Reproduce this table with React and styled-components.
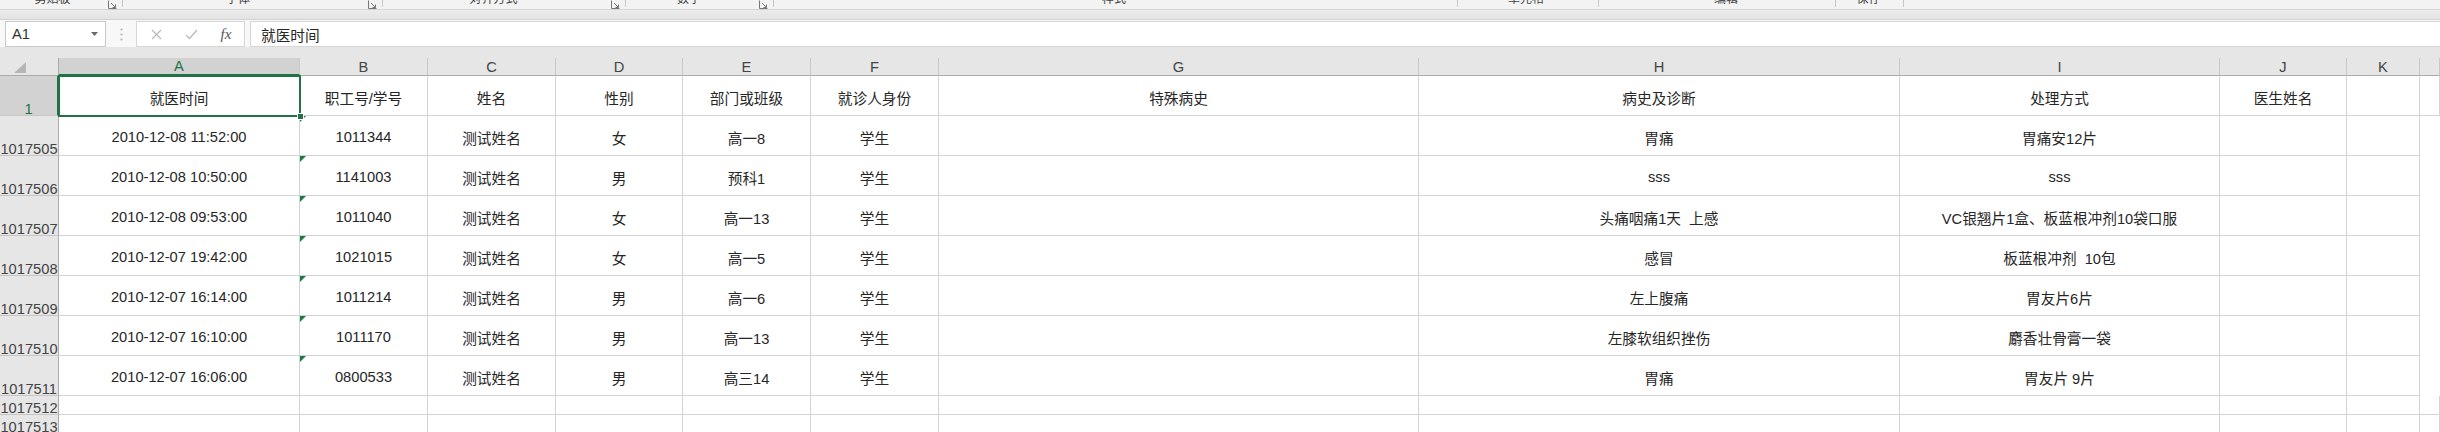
import React from "react";
import styled, { createGlobalStyle } from "styled-components";

const GlobalStyle = createGlobalStyle`
  html, body { margin: 0; padding: 0; background: #ffffff; }
  body {
    width: 2440px; height: 432px; overflow: hidden;
    font-family: "Liberation Sans", "Noto Sans CJK SC", sans-serif;
  }
  * { box-sizing: border-box; }
`;

const COLS = "59px 241px 128px 128px 127px 128px 128px 480px 481px 320px 127px 73px 1fr";
const GREEN = "#217346";

const Window = styled.div`
  width: 2440px;
  height: 432px;
  overflow: hidden;
  display: flex;
  flex-direction: column;
  background: #ffffff;
`;

/* ---------- ribbon remnant ---------- */
const RibbonStrip = styled.div`
  flex: none;
  height: 10px;
  display: flex;
  align-items: flex-start;
  overflow: hidden;
  background: #f3f3f3;
  border-bottom: 1px solid #d5d5d5;
`;
const GroupLabel = styled.div`
  flex: none;
  width: ${(p) => p.$w}px;
  margin-top: -8px;
  text-align: center;
  font-family: "Noto Sans CJK SC", sans-serif;
  font-size: 12px;
  line-height: 12px;
  color: #444444;
  white-space: nowrap;
`;
const Launcher = styled.div`
  flex: none;
  width: ${(p) => p.$w}px;
  display: flex;
  justify-content: center;
  align-items: flex-start;
  gap: 5px;
`;
const GroupSep = styled.div`
  flex: none;
  width: ${(p) => p.$w}px;
  display: flex;
  justify-content: center;
  &::before {
    content: "";
    width: 1px;
    height: 7px;
    background: #c6c6c6;
  }
`;
const SepLine = styled.span`
  width: 1px;
  height: 7px;
  background: #c6c6c6;
`;

const Band = styled.div`
  flex: none;
  height: 10px;
  background: linear-gradient(#ebebeb, #e3e3e3);
  border-bottom: 1px solid #d2d2d2;
`;

/* ---------- formula bar ---------- */
const FormulaBar = styled.div`
  flex: none;
  height: 27px;
  padding-top: 1px;
  display: flex;
  align-items: flex-start;
  background: #f8f8f8;
`;
const NameBox = styled.div`
  flex: none;
  width: 101px;
  height: 26px;
  margin-left: 5px;
  padding: 0 7px 0 6px;
  display: flex;
  align-items: center;
  justify-content: space-between;
  background: #ffffff;
  border: 1px solid #c9c9c9;
  font-size: 14.67px;
  color: #333333;
`;
const Dots = styled.div`
  flex: none;
  width: 30px;
  height: 26px;
  display: flex;
  align-items: center;
  justify-content: center;
`;
const FxBox = styled.div`
  flex: none;
  width: 109px;
  height: 26px;
  padding-left: 9px;
  display: flex;
  align-items: center;
  gap: 15px;
  background: #ffffff;
  border: 1px solid #d6d6d6;
`;
const FxIcon = styled.span`
  width: 20px;
  display: flex;
  justify-content: center;
  align-items: center;
  color: ${(p) => (p.$active ? "#555555" : "#b8b8b8")};
  font-family: ${(p) => (p.$serif ? '"Liberation Serif", serif' : '"Liberation Sans", sans-serif')};
  font-style: ${(p) => (p.$serif ? "italic" : "normal")};
  font-size: 15px;
`;
const FormulaInput = styled.div`
  flex: 1;
  height: 26px;
  margin-left: 5px;
  padding-left: 10px;
  display: flex;
  align-items: center;
  background: #ffffff;
  border: 1px solid #d6d6d6;
  border-right: none;
  font-size: 14.67px;
  color: #262626;
`;

/* ---------- sheet ---------- */
const Sheet = styled.div`
  flex: 1;
  display: flex;
  flex-direction: column;
  background: #e6e6e6;
  padding-top: 11px;
  overflow: hidden;
`;
const Row = styled.div`
  flex: none;
  display: grid;
  grid-template-columns: ${COLS};
  height: ${(p) => p.$h}px;
  background: #ffffff;
`;
const HeaderRow = styled(Row)`
  background: #e6e6e6;
`;
const Corner = styled.div`
  display: flex;
  align-items: flex-end;
  padding: 0 0 2px 14px;
  background: #e6e6e6;
  border-right: 1px solid #ababab;
  border-bottom: 1px solid #ababab;
`;
const ColHeader = styled.div`
  display: flex;
  align-items: center;
  justify-content: center;
  font-size: 14.67px;
  color: ${(p) => (p.$sel ? GREEN : "#444444")};
  background: ${(p) => (p.$sel ? "#d2d2d2" : "#e6e6e6")};
  border-right: 1px solid #c8c8c8;
  border-bottom: ${(p) => (p.$sel ? `2px solid ${GREEN}` : "1px solid #ababab")};
`;
const RowHeader = styled.div`
  display: flex;
  align-items: flex-end;
  justify-content: center;
  font-size: 14.67px;
  line-height: 11px;
  color: ${(p) => (p.$sel ? GREEN : "#444444")};
  background: ${(p) => (p.$sel ? "#d2d2d2" : "#e6e6e6")};
  border-right: ${(p) => (p.$sel ? `2px solid ${GREEN}` : "1px solid #ababab")};
  border-bottom: 1px solid #c6c6c6;
  overflow: visible;
  white-space: nowrap;
`;
const Cell = styled.div`
  position: relative;
  display: flex;
  align-items: center;
  justify-content: center;
  padding-top: 3px;
  font-size: 14.67px;
  color: #262626;
  white-space: nowrap;
  border-right: 1px solid #d4d4d4;
  border-bottom: 1px solid #d4d4d4;

  ${(p) =>
    p.$marker &&
    `
    &::before {
      content: "";
      position: absolute;
      left: 0;
      top: 0;
      width: 0;
      height: 0;
      border-top: 6px solid #1f7a45;
      border-right: 6px solid transparent;
    }
  `}

  ${(p) =>
    p.$selected &&
    `
    &::after {
      content: "";
      position: absolute;
      left: -1px;
      top: -1px;
      right: -2px;
      bottom: -2px;
      border: 2px solid ${GREEN};
      z-index: 3;
      pointer-events: none;
    }
  `}
`;
const FillHandle = styled.span`
  position: absolute;
  right: -5px;
  bottom: -5px;
  width: 7px;
  height: 7px;
  background: ${GREEN};
  border: 1px solid #ffffff;
  z-index: 4;
`;

/* ---------- icons ---------- */
const LauncherIcon = () => (
  <svg width="9" height="9" viewBox="0 0 9 9">
    <path d="M0.5 0.5 V8.5 H8.5" fill="none" stroke="#777" strokeWidth="1" />
    <path d="M3 3 L7.5 7.5 M7.5 4.5 V7.5 H4.5" fill="none" stroke="#777" strokeWidth="1" />
  </svg>
);
const Caret = () => (
  <svg width="7" height="4" viewBox="0 0 7 4">
    <path d="M0 0 H7 L3.5 4 Z" fill="#6a6a6a" />
  </svg>
);
const VDots = () => (
  <svg width="3" height="13" viewBox="0 0 3 13">
    <circle cx="1.5" cy="1.5" r="1.1" fill="#b5b5b5" />
    <circle cx="1.5" cy="6.5" r="1.1" fill="#b5b5b5" />
    <circle cx="1.5" cy="11.5" r="1.1" fill="#b5b5b5" />
  </svg>
);
const CrossIcon = () => (
  <svg width="11" height="11" viewBox="0 0 11 11">
    <path d="M1 1 L10 10 M10 1 L1 10" stroke="#b9b9b9" strokeWidth="1.2" />
  </svg>
);
const CheckIcon = () => (
  <svg width="13" height="11" viewBox="0 0 13 11">
    <path d="M1 6 L4.5 9.5 L12 1" fill="none" stroke="#b9b9b9" strokeWidth="1.2" />
  </svg>
);
const CornerTri = () => (
  <svg width="12" height="11" viewBox="0 0 12 11">
    <polygon points="12,0 12,11 0,11" fill="#b6b6b6" />
  </svg>
);

/* ---------- data ---------- */
const ribbon = [
  { t: "label", w: 105, text: "剪贴板" },
  { t: "launch", w: 20 },
  { t: "label", w: 226, text: "字体" },
  { t: "launch", w: 48 },
  { t: "label", w: 189, text: "对齐方式" },
  { t: "launch", w: 60 },
  { t: "label", w: 82, text: "数字" },
  { t: "launch", w: 72 },
  { t: "label", w: 624, text: "样式" },
  { t: "sep", w: 62 },
  { t: "label", w: 76, text: "单元格" },
  { t: "sep", w: 68 },
  { t: "label", w: 188, text: "编辑" },
  { t: "sep", w: 30 },
  { t: "label", w: 37, text: "保存" },
  { t: "sep", w: 32 },
];

const letters = ["A", "B", "C", "D", "E", "F", "G", "H", "I", "J", "K", ""];

const header = ["就医时间", "职工号/学号", "姓名", "性别", "部门或班级", "就诊人身份", "特殊病史", "病史及诊断", "处理方式", "医生姓名", "", ""];

const rows = [
  ["1017505", "2010-12-08 11:52:00", "1011344", "测试姓名", "女", "高一8", "学生", "", "胃痛", "胃痛安12片"],
  ["1017506", "2010-12-08 10:50:00", "1141003", "测试姓名", "男", "预科1", "学生", "", "sss", "sss"],
  ["1017507", "2010-12-08 09:53:00", "1011040", "测试姓名", "女", "高一13", "学生", "", "头痛咽痛1天\u00a0\u00a0上感", "VC银翘片1盒、板蓝根冲剂10袋口服"],
  ["1017508", "2010-12-07 19:42:00", "1021015", "测试姓名", "女", "高一5", "学生", "", "感冒", "板蓝根冲剂\u00a0\u00a010包"],
  ["1017509", "2010-12-07 16:14:00", "1011214", "测试姓名", "男", "高一6", "学生", "", "左上腹痛", "胃友片6片"],
  ["1017510", "2010-12-07 16:10:00", "1011170", "测试姓名", "男", "高一13", "学生", "", "左膝软组织挫伤", "麝香壮骨膏一袋"],
  ["1017511", "2010-12-07 16:06:00", "0800533", "测试姓名", "男", "高三14", "学生", "", "胃痛", "胃友片\u00a09片"],
];

const emptyRows = ["1017512", "1017513"];

export default function App() {
  return (
    <>
      <GlobalStyle />
      <Window>
        <RibbonStrip>
          {ribbon.map((r, i) => {
            if (r.t === "label") return <GroupLabel key={i} $w={r.w}>{r.text}</GroupLabel>;
            if (r.t === "launch")
              return (
                <Launcher key={i} $w={r.w}>
                  <LauncherIcon />
                  <SepLine />
                </Launcher>
              );
            return <GroupSep key={i} $w={r.w} />;
          })}
        </RibbonStrip>
        <Band />
        <FormulaBar>
          <NameBox>
            <span>A1</span>
            <Caret />
          </NameBox>
          <Dots>
            <VDots />
          </Dots>
          <FxBox>
            <FxIcon><CrossIcon /></FxIcon>
            <FxIcon><CheckIcon /></FxIcon>
            <FxIcon $active $serif>fx</FxIcon>
          </FxBox>
          <FormulaInput>就医时间</FormulaInput>
        </FormulaBar>
        <Sheet>
          <HeaderRow $h={18}>
            <Corner>
              <CornerTri />
            </Corner>
            {letters.map((l, i) => (
              <ColHeader key={i} $sel={l === "A"}>{l}</ColHeader>
            ))}
          </HeaderRow>
          <Row $h={40}>
            <RowHeader $sel>1</RowHeader>
            {header.map((h, i) => (
              <Cell key={i} $selected={i === 0}>
                {h}
                {i === 0 && <FillHandle />}
              </Cell>
            ))}
          </Row>
          {rows.map((r) => (
            <Row key={r[0]} $h={40}>
              <RowHeader>{r[0]}</RowHeader>
              {r.slice(1).map((v, i) => (
                <Cell key={i} $marker={i === 1}>{v}</Cell>
              ))}
              <Cell />
              <Cell />
            </Row>
          ))}
          {emptyRows.map((n) => (
            <Row key={n} $h={19}>
              <RowHeader>{n}</RowHeader>
              {letters.map((_, i) => (
                <Cell key={i} />
              ))}
            </Row>
          ))}
        </Sheet>
      </Window>
    </>
  );
}
